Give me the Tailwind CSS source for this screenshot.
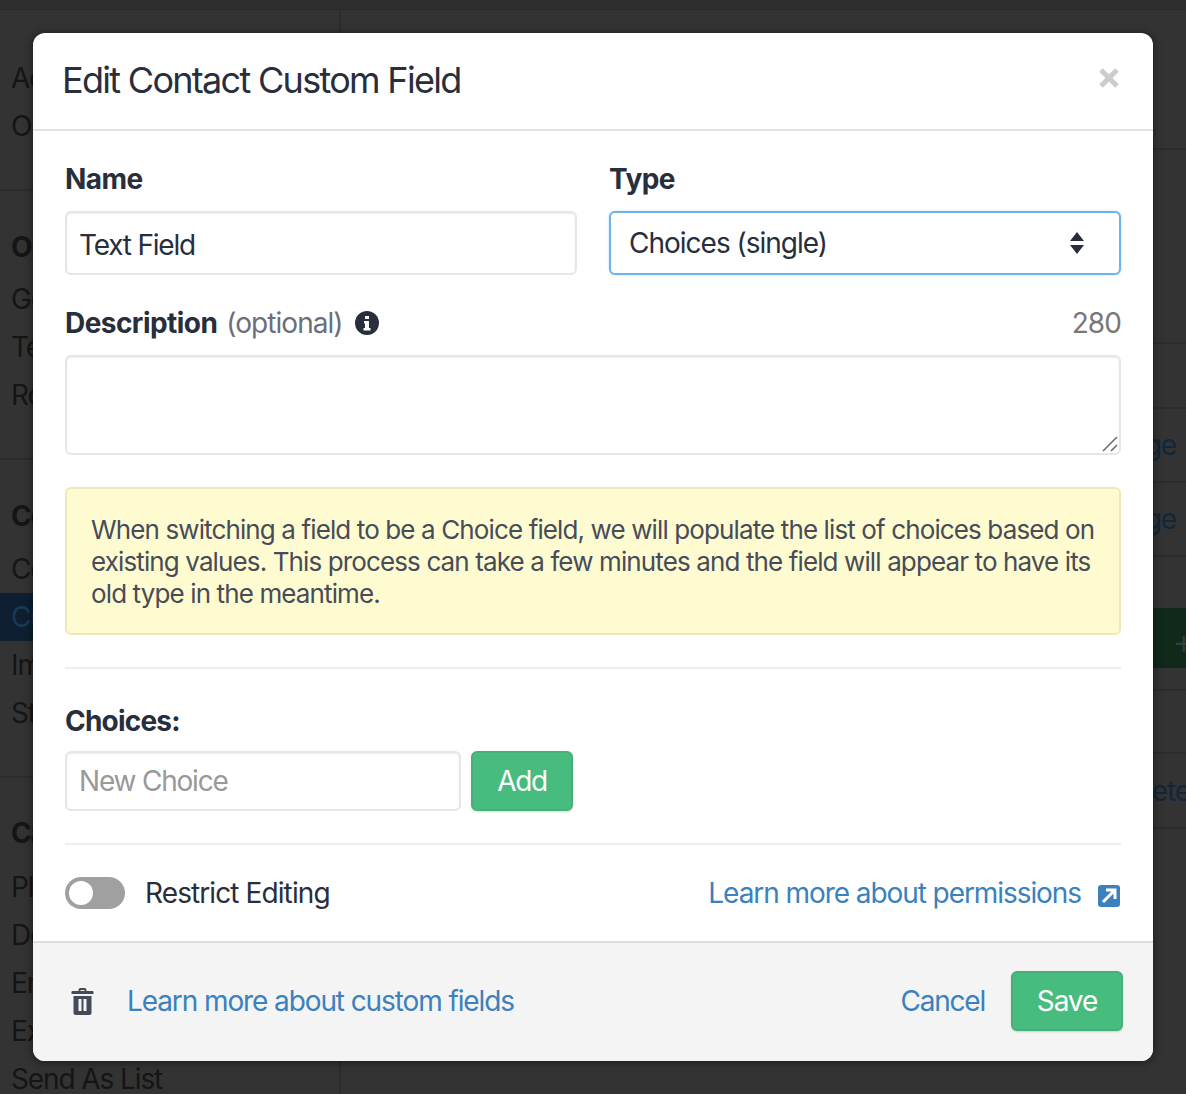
<!DOCTYPE html>
<html lang="en">
<head>
  <meta charset="UTF-8">
  <title>Edit Contact Custom Field</title>
  <script src="https://cdn.jsdelivr.net/npm/@tailwindcss/browser@4"></script>
</head>
<body class="relative w-[1186px] h-[1094px] overflow-hidden bg-[#333333] font-['Inter',sans-serif] text-[28px] tracking-[-1.1px] text-[#151515]">
  <!-- page behind the backdrop -->
  <div class="h-[10px] bg-[#2e2e2e] border-b border-[#2a2a2a]"></div>
  <div class="flex h-[1084px]">
    <aside class="w-[341px] shrink-0 border-r-2 border-[#2c2c2c] pl-[11px]">
      <div class="h-[181px] border-b-2 border-[#2c2c2c] -ml-[11px] pl-[11px] pt-[44px] leading-[48px]">
        <div>Account</div>
        <div>Org</div>
      </div>
      <div class="h-[269px] border-b-2 border-[#2c2c2c] -ml-[11px] pl-[11px] pt-[32px] leading-[48px]">
        <div class="font-bold">Org</div>
        <div class="mt-[4px]">General</div>
        <div>Teams</div>
        <div>Roles</div>
      </div>
      <div class="h-[318px] border-b-2 border-[#2c2c2c] -ml-[11px] pt-[32px] leading-[48px]">
        <div class="pl-[11px] font-bold">Contacts</div>
        <div class="pl-[11px] mt-[5px]">Contacts</div>
        <div class="pl-[11px] bg-[#0d1f30] text-[#1b3a54]">Custom</div>
        <div class="pl-[11px]">Import</div>
        <div class="pl-[11px]">Stages</div>
      </div>
      <div class="pt-[31px] leading-[48px]">
        <div class="font-bold">Campaigns</div>
        <div class="mt-[6px]">Plans</div>
        <div>Domains</div>
        <div>Emails</div>
        <div>Exports</div>
        <div>Send As List</div>
      </div>
    </aside>
    <main class="flex-1">
      <div class="h-[140px] border-b-2 border-[#2c2c2c]"></div>
      <div class="h-[194px] border-b-2 border-[#2c2c2c]"></div>
      <div class="h-[65px] border-b-2 border-[#2c2c2c]"></div>
      <div class="h-[74px] border-b-2 border-[#2c2c2c] flex items-center justify-end pr-[10px] text-[#10273b]">Manage</div>
      <div class="h-[74px] border-b-2 border-[#2c2c2c] flex items-center justify-end pr-[10px] text-[#10273b]">Manage</div>
      <div class="h-[134px] border-b-2 border-[#2c2c2c] pt-[51px] flex justify-end">
        <div class="w-[60px] h-[60px] rounded-l-[4px] bg-[#10291a] text-[#3b3b3b] text-[36px] font-light pl-[46px] pt-[6px]">+</div>
      </div>
      <div class="h-[63px] border-b-2 border-[#2c2c2c]"></div>
      <div class="h-[75px] border-b-2 border-[#2c2c2c] flex items-center justify-end -mr-[4px] text-[#10273b]">Delete</div>
    </main>
  </div>

  <!-- backdrop + modal -->
  <div class="absolute left-[33px] top-[33px] w-[1120px] h-[1028px] rounded-[12px] bg-white text-[#282e3b] shadow-[0_1px_10px_rgba(0,0,0,0.5)] flex flex-col overflow-hidden">
    <header class="h-[98px] shrink-0 border-b-2 border-[#e4e4e4] flex items-center justify-between pl-[29px] pr-[33px]">
      <h1 class="text-[36px] tracking-[-1.7px] -mt-[2px]">Edit Contact Custom Field</h1>
      <svg class="w-[22px] h-[22px] -mt-[6px]" viewBox="0 0 22 22"><path d="M3 3l16 16M19 3L3 19" stroke="#cccccc" stroke-width="5"/></svg>
    </header>

    <div class="flex-1 px-[32px] pt-[30px]">
      <div class="grid grid-cols-[512px_512px] gap-x-[32px]">
        <div>
          <label class="block h-[36px] leading-[36px] font-bold tracking-[-0.55px]">Name</label>
          <input value="Text Field" class="mt-[14px] block w-full h-[64px] px-[12px] pt-[4px] rounded-[6px] border-2 border-[#e6e6e6] shadow-[inset_0_1px_2px_rgba(0,0,0,0.08)] tracking-[-1.2px] outline-none">
        </div>
        <div>
          <label class="block h-[36px] leading-[36px] font-bold tracking-[-0.55px]">Type</label>
          <div class="relative mt-[14px] h-[64px]">
            <select class="block w-full h-full appearance-none pl-[18px] rounded-[6px] border-2 border-[#6db3ee] shadow-[0_0_2px_rgba(109,179,238,0.5)] tracking-[-1px] outline-none bg-white">
              <option>Choices (single)</option>
            </select>
            <svg class="absolute right-[36px] top-[20px] w-[16px] h-[24px]" viewBox="0 0 16 24"><path d="M8 1l7 9H1zM8 23L1 14h14z" fill="#282e3b"/></svg>
          </div>
        </div>
      </div>

      <div class="mt-[30px] flex items-center h-[36px]">
        <label class="font-bold tracking-[-0.55px]">Description</label>
        <span class="ml-[9px] text-[#6b6f7b] tracking-[-0.95px]">(optional)</span>
        <svg class="ml-[12px] w-[24px] h-[24px]" viewBox="0 0 24 24">
          <circle cx="12" cy="12" r="12" fill="#282e3b"/>
          <path d="M10 5h4v3h-4zM9 10h5v7h1.500v2.500h-7V17H10v-4.500H9z" fill="#ffffff"/>
        </svg>
        <span class="ml-auto text-[#777777] tracking-[-0.9px]">280</span>
      </div>
      <div class="relative mt-[14px]">
        <textarea class="block w-full h-[100px] resize-none rounded-[6px] border-2 border-[#e6e6e6] shadow-[inset_0_1px_2px_rgba(0,0,0,0.08)] outline-none"></textarea>
        <svg class="absolute right-[3px] bottom-[3px] w-[16px] h-[16px]" viewBox="0 0 16 16"><path d="M1 15L15 1M9 15l6-6" stroke="#666666" stroke-width="1.500"/></svg>
      </div>

      <div class="mt-[32px] h-[148px] rounded-[6px] border-2 border-[#eee8b8] bg-[#fefbd0] pl-[24px] pr-[20px] pt-[25px] text-[26px] leading-[32px] tracking-[-0.88px] text-[#474c59]">
        When switching a field to be a Choice field, we will populate the list of choices based on existing values. This process can take a few minutes and the field will appear to have its old type in the meantime.
      </div>

      <hr class="mt-[32px] border-t-2 border-[#eeeeee]">

      <label class="block mt-[34px] h-[36px] leading-[36px] font-bold tracking-[-0.8px]">Choices:</label>
      <div class="mt-[12px] flex gap-[10px]">
        <input placeholder="New Choice" class="w-[396px] h-[60px] px-[12px] rounded-[6px] border-2 border-[#e6e6e6] shadow-[inset_0_1px_2px_rgba(0,0,0,0.08)] tracking-[-1.2px] outline-none placeholder:text-[#999999]">
        <button class="w-[102px] h-[60px] rounded-[6px] bg-[#48bb7e] border-2 border-[#45b078] shadow-[0_1px_2px_rgba(0,0,0,0.15)] text-white tracking-[-1.3px]">Add</button>
      </div>

      <hr class="mt-[32px] border-t-2 border-[#eeeeee]">

      <div class="mt-[32px] h-[32px] flex items-center">
        <span class="w-[60px] h-[32px] rounded-full bg-[#a0a0a0] flex items-center pl-[4px]"><span class="w-[24px] h-[24px] rounded-full bg-white"></span></span>
        <span class="ml-[20px] tracking-[-0.9px]">Restrict Editing</span>
        <a class="ml-auto text-[#3a81bd] tracking-[-1.07px]">Learn more about permissions</a>
        <svg class="ml-[17px] mr-[1px] w-[22px] h-[22px] mt-[6px]" viewBox="0 0 22 22">
          <rect width="22" height="22" rx="3" fill="#3a81bd"/>
          <path d="M5 17L16 6M8 5h9v9" stroke="#ffffff" stroke-width="3" fill="none"/>
        </svg>
      </div>
    </div>

    <footer class="h-[120px] shrink-0 border-t-2 border-[#dddddd] bg-[#f4f4f4] flex items-center pb-[2px] pl-[38px] pr-[30px]">
      <svg class="w-[23px] h-[28px]" viewBox="0 0 22 28">
        <path d="M7 4V3a2 2 0 0 1 2-2h4a2 2 0 0 1 2 2v1h6a1 1 0 0 1 1 1v2H0V5a1 1 0 0 1 1-1zM9 4h4V3H9z" fill="#444a58" fill-rule="evenodd"/>
        <path d="M2 9h18v17a2 2 0 0 1-2 2H4a2 2 0 0 1-2-2zM7 12v12h3V12zM12 12v12h3V12z" fill="#444a58" fill-rule="evenodd"/>
      </svg>
      <a class="ml-[33px] text-[#3a81bd] tracking-[-1.1px]">Learn more about custom fields</a>
      <a class="ml-auto text-[#3a81bd] tracking-[-1.2px]">Cancel</a>
      <button class="ml-[26px] w-[112px] h-[60px] rounded-[6px] bg-[#48bb7e] border-2 border-[#45b078] shadow-[0_1px_2px_rgba(0,0,0,0.15)] text-white tracking-[-1.1px]">Save</button>
    </footer>
  </div>
</body>
</html>
